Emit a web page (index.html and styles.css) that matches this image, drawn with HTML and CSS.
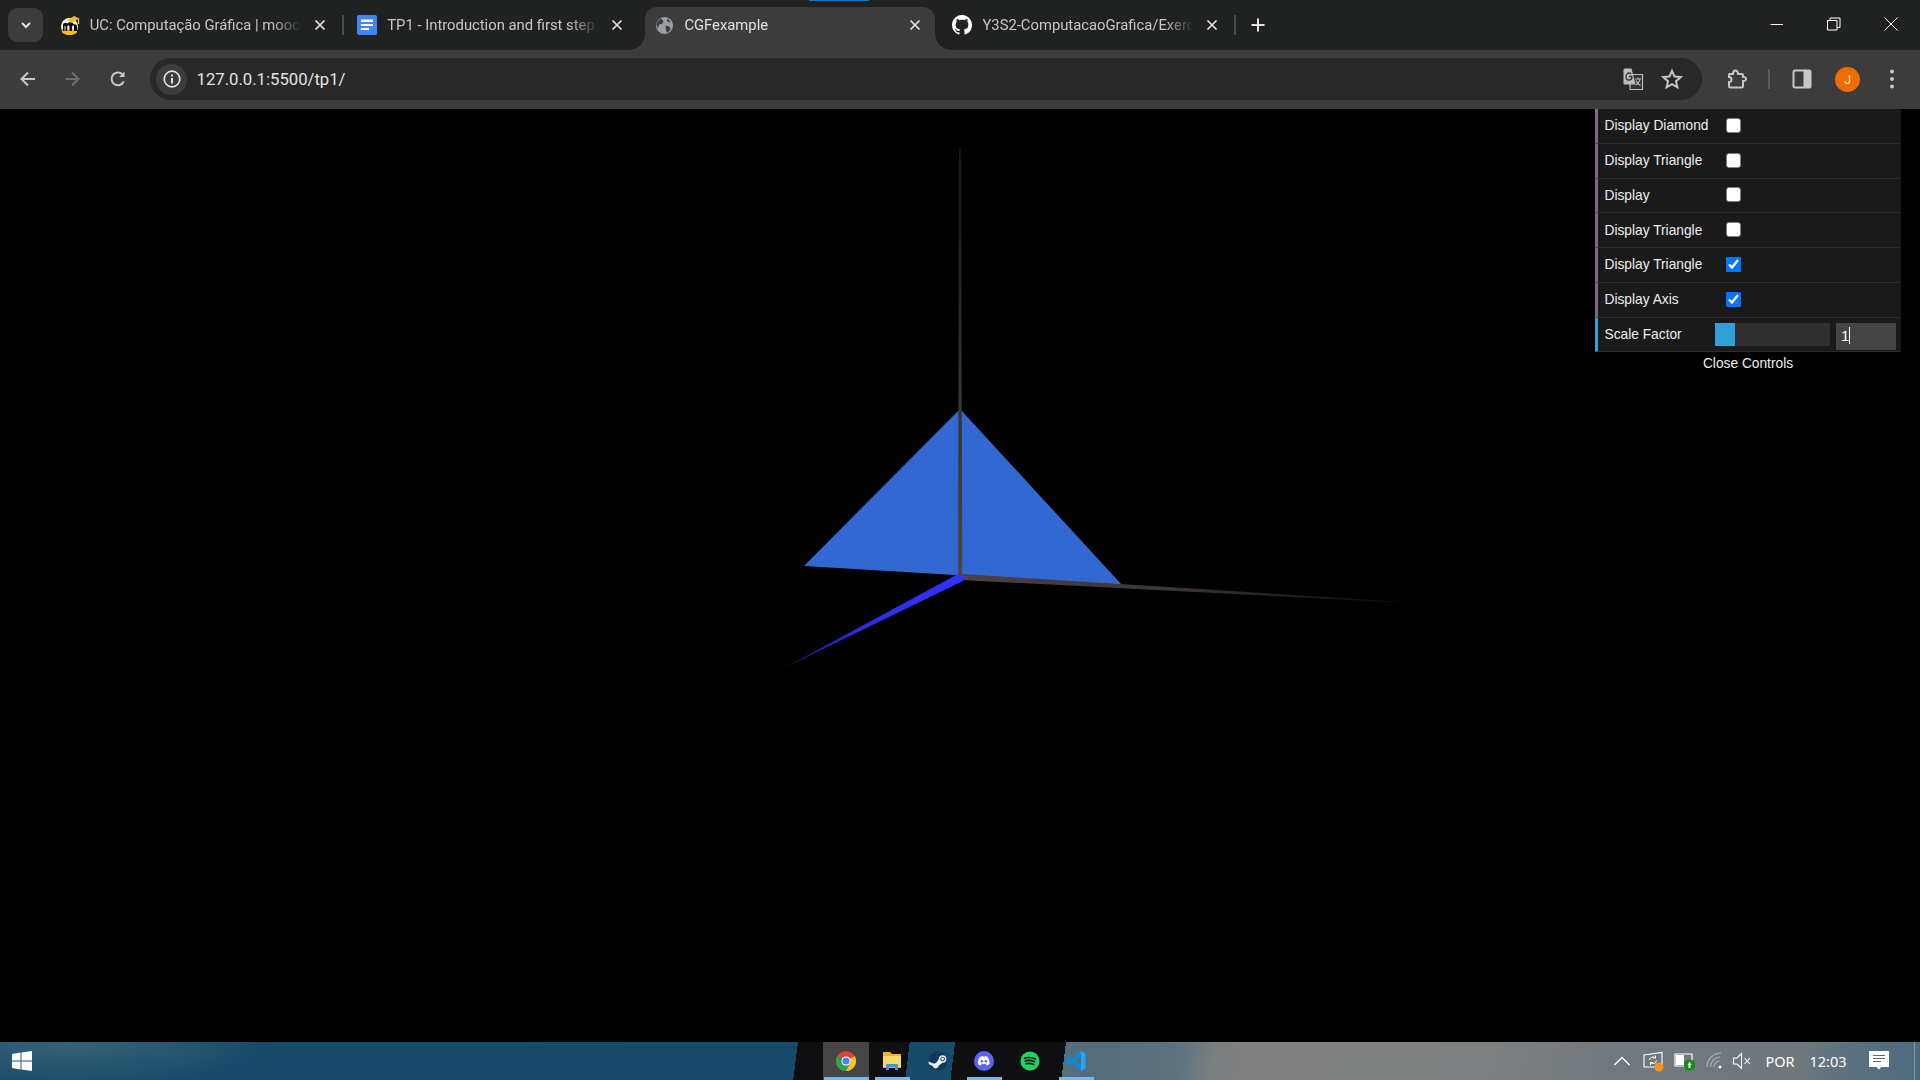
FILE: index.html
```html
<!DOCTYPE html>
<html lang="pt">
<head>
<meta charset="utf-8">
<title>CGFexample</title>
<link rel="stylesheet" href="styles.css">
</head>
<body>
<header class="tabstrip">
  <button class="tabsearch"><svg width="14" height="14" viewBox="0 0 14 14"><path d="M3 5l4 4 4-4" fill="none" stroke="#e3e3e3" stroke-width="2"/></svg></button>
  <div class="tab">
    <svg class="fav" viewBox="0 0 20 20"><circle cx="9.500" cy="11.500" r="8.500" fill="#f7f7f0"/><path d="M2 17.500C4 19.500 7 20 9.500 20S15 19.500 17 17.500V14H2z" fill="#f5b921"/><path d="M3 16V10C3 7.500 6 7 7.500 8.500 9 6.500 13 7 14 9.500 15.500 9 17 10 17 11.500V16H14V11.500C14 10 12.300 10 12 11.500V16H9.500V11.500C9.500 10 7.500 10 7.300 11.500V16H5.500V11H4.500V16Z" fill="#111"/><path d="M7 5.500L14 1 19 3.500 12.500 7.500Z" fill="#f5b921"/><path d="M18.500 3.500V9" stroke="#f5b921" stroke-width="1.400"/></svg>
    <span class="title">UC: Computação Gráfica | mooc</span>
    <svg class="close" viewBox="0 0 16 16"><path d="M3.500 3.500l9 9m0-9l-9 9"/></svg>
    <i class="sep"></i>
  </div>
  <div class="tab">
    <svg class="fav" viewBox="0 0 20 20"><rect width="20" height="20" rx="2" fill="#4285f4"/><path d="M4 4.500h12v2.500H4zM4 9h12v2H4zM4 13h8v2H4z" fill="#fff"/></svg>
    <span class="title">TP1 - Introduction and first step</span>
    <svg class="close" viewBox="0 0 16 16"><path d="M3.500 3.500l9 9m0-9l-9 9"/></svg>
  </div>
  <div class="tab active">
    <svg class="fav" viewBox="0 0 20 20"><circle cx="10" cy="10" r="9" fill="#9aa0a6"/><path d="M6 2.500L9 5 8 8 4.500 9 3 13 1.500 9C2 6 3.500 4 6 2.500ZM11 10l4 1 1.500 3-3 3.500-2-2ZM13 2.800l3.500 3-2 1-2-2Z" fill="#3c3c3c"/></svg>
    <span class="title">CGFexample</span>
    <svg class="close" viewBox="0 0 16 16"><path d="M3.500 3.500l9 9m0-9l-9 9"/></svg>
  </div>
  <div class="tab">
    <svg class="fav" viewBox="0 0 16 16"><path fill="#fff" d="M8 0C3.580 0 0 3.580 0 8c0 3.540 2.290 6.530 5.470 7.590.4.070.55-.17.55-.38 0-.19-.01-.82-.01-1.490-2.010.37-2.530-.49-2.690-.94-.09-.23-.48-.94-.82-1.130-.28-.15-.68-.52-.01-.53.63-.01 1.080.58 1.230.82.72 1.210 1.870.87 2.330.66.07-.52.28-.87.51-1.070-1.780-.2-3.640-.89-3.640-3.950 0-.87.31-1.590.82-2.150-.08-.2-.36-1.020.08-2.120 0 0 .67-.21 2.200.82.64-.18 1.320-.27 2-.27.68 0 1.360.09 2 .27 1.530-1.040 2.200-.82 2.200-.82.44 1.100.16 1.920.08 2.120.51.56.82 1.270.82 2.150 0 3.070-1.870 3.750-3.650 3.950.29.25.54.73.54 1.480 0 1.070-.01 1.930-.01 2.200 0 .21.15.46.55.38A8.013 8.013 0 0016 8c0-4.420-3.580-8-8-8z"/></svg>
    <span class="title">Y3S2-ComputacaoGrafica/Exerc</span>
    <svg class="close" viewBox="0 0 16 16"><path d="M3.500 3.500l9 9m0-9l-9 9"/></svg>
    <i class="sep"></i>
  </div>
  <svg class="newtab" viewBox="0 0 16 16"><path d="M8 1.500v13M1.500 8h13"/></svg>
  <div class="winctl">
    <span class="winbtn"><svg width="14" height="14" viewBox="0 0 14 14"><path d="M1.500 7.500h13" stroke="#fff" fill="none"/></svg></span>
    <span class="winbtn"><svg width="14" height="14" viewBox="0 0 14 14"><path d="M.5 3.500h9.500v9.500H.5zM3 3.500V1h10v9.500h-3" stroke="#fff" fill="none"/></svg></span>
    <span class="winbtn"><svg width="14" height="14" viewBox="0 0 14 14"><path d="M.5.500l13 13m0-13l-13 13" stroke="#fff" fill="none"/></svg></span>
  </div>
</header>

<nav class="toolbar">
  <span class="tbtn"><svg width="20" height="20" viewBox="0 0 20 20"><path d="M17 10H4M10 3.500L3.500 10l6.500 6.500" class="ln"/></svg></span>
  <span class="tbtn"><svg width="20" height="20" viewBox="0 0 20 20"><path d="M2.500 10h13M9 3.500l6.500 6.500-6.500 6.500" class="ln dim"/></svg></span>
  <span class="tbtn"><svg width="20" height="20" viewBox="0 0 20 20"><path d="M15.800 12.500A6.400 6.400 0 1 1 15 5.800" class="ln"/><path d="M16.500 2.500v5.500h-5.500z" fill="#c7c7c7"/></svg></span>
  <div class="omnibox">
    <span class="chip"><svg width="20" height="20" viewBox="0 0 20 20"><circle cx="10" cy="10" r="7.800" fill="none" stroke="#e3e3e3" stroke-width="1.700"/><path d="M9 9h2v5.500H9zM9 5.500h2v2H9z" fill="#e3e3e3"/></svg></span>
    <span class="url">127.0.0.1:5500/tp1/</span>
    <span class="obtn trans"><svg width="22" height="22" viewBox="0 0 22 22"><path d="M8 6.500h12.500v15H8z" fill="#333" stroke="#bdbdbd" stroke-width="1.200"/><path d="M1.500 2A1.500 1.500 0 0 1 3 .5h6.500l4 16H3A1.500 1.500 0 0 1 1.500 15z" fill="#bdbdbd"/><path d="M10 8.500H7M10 8.500c0 2.500-1.500 3.500-3 3.500s-3-1.300-3-3.300S5.500 5 7 5c1 0 1.700.4 2.200 1" fill="none" stroke="#333" stroke-width="1.400"/><path d="M13 11h6M16 9.500V11M18 11c-.5 3-2.500 5-4.500 6M14 12.500c.8 2 2.500 4 4.500 5" fill="none" stroke="#bdbdbd" stroke-width="1.100"/></svg></span>
    <span class="obtn"><svg width="22" height="22" viewBox="0 0 22 22"><path d="M11 2.800l2.500 5.700 6.200.6-4.700 4.100 1.400 6.100L11 16.200l-5.400 3.100L7 13.200 2.300 9.100l6.200-.6z" class="ln"/></svg></span>
  </div>
  <span class="tbtn ext"><svg width="22" height="22" viewBox="0 0 22 22"><path d="M4.500 6H8C8 3.800 9 2.500 10.500 2.500S13 3.800 13 6h3.500A1.500 1.500 0 0 1 18 7.500V9c2-.2 3 .8 3 2s-1 2.200-3 2v5a1.500 1.500 0 0 1-1.500 1.500h-11A1.500 1.500 0 0 1 4 18v-4c1.500 0 2.500-1 2.500-2.500S5.500 9 4 9V7.500A1.500 1.500 0 0 1 4.500 6z" class="ln"/></svg></span>
  <i class="tsep"></i>
  <span class="tbtn side"><svg width="20" height="20" viewBox="0 0 20 20"><rect x="1.500" y="1.500" width="17" height="17" rx="1.500" class="ln"/><path d="M11.500 1.500h7v17h-7z" fill="#c7c7c7"/></svg></span>
  <span class="tbtn profile"><span class="avatar">J</span></span>
  <span class="tbtn dots"><svg width="20" height="24" viewBox="0 0 20 24"><circle cx="10" cy="4.500" r="2" fill="#c7c7c7"/><circle cx="10" cy="12" r="2" fill="#c7c7c7"/><circle cx="10" cy="19.500" r="2" fill="#c7c7c7"/></svg></span>
</nav>

<main class="stage">
  <svg class="scene" viewBox="0 109 1920 933" preserveAspectRatio="none">
    <defs>
      <linearGradient id="gy" gradientUnits="userSpaceOnUse" x1="0" y1="149" x2="0" y2="577"><stop offset="0" stop-color="#161716"/><stop offset=".5" stop-color="#2e312e"/><stop offset="1" stop-color="#454845"/></linearGradient>
      <linearGradient id="gx" gradientUnits="userSpaceOnUse" x1="960" y1="577" x2="1397" y2="602"><stop offset="0" stop-color="#4a4244"/><stop offset=".5" stop-color="#3a3436"/><stop offset="1" stop-color="#0a0909"/></linearGradient>
      <linearGradient id="gz" gradientUnits="userSpaceOnUse" x1="962" y1="577" x2="786" y2="667"><stop offset="0" stop-color="#3232ff"/><stop offset=".6" stop-color="#2c2ce0"/><stop offset="1" stop-color="#16167e"/></linearGradient>
    </defs>
    <polygon points="960,409 804,566 1122,585" fill="#3367d1"/>
    <polygon points="961,574 1397,601.500 1397,602.500 961,580" fill="url(#gx)"/>
    <polygon points="958,574 965,576 963,581 785,667.500" fill="url(#gz)"/>
    <polygon points="959,149 961,149 962.300,576 958,576" fill="url(#gy)"/>
  </svg>
  <aside class="gui">
    <div class="row"><span class="lbl">Display Diamond</span><input class="chk" type="checkbox"></div>
    <div class="row"><span class="lbl">Display Triangle</span><input class="chk" type="checkbox"></div>
    <div class="row"><span class="lbl">Display</span><input class="chk" type="checkbox"></div>
    <div class="row"><span class="lbl">Display Triangle</span><input class="chk" type="checkbox"></div>
    <div class="row"><span class="lbl">Display Triangle</span><input class="chk" type="checkbox" checked></div>
    <div class="row"><span class="lbl">Display Axis</span><input class="chk" type="checkbox" checked></div>
    <div class="row num"><span class="lbl">Scale Factor</span><div class="slider"><div class="fill"></div></div><div class="numbox">1<i class="caret"></i></div></div>
    <div class="closebar">Close Controls</div>
  </aside>
</main>

<footer class="taskbar">
  <svg class="start" viewBox="0 0 20 20"><path d="M0 3L8.500 1.600V9.500H0zM9.500 1.400L20 0V9.500H9.500zM0 10.500H8.500V18.400L0 17zM9.500 10.500H20V20L9.500 18.600z" fill="#fff"/></svg>
  <div class="apps">
    <span class="app hot on"><svg width="20" height="20" viewBox="0 0 20 20"><circle cx="10" cy="10" r="10" fill="#db4437"/><path d="M10 10L1.300 5A10 10 0 0 0 10 20z" fill="#0f9d58"/><path d="M10 10L18.700 5A10 10 0 0 1 10 20z" fill="#fbc02d"/><path d="M10 20l4.300-7.500L10 10 5.700 12.500 1.300 5A10 10 0 0 0 10 20z" fill="#3ca04f"/><circle cx="10" cy="10" r="4.600" fill="#fff"/><circle cx="10" cy="10" r="3.600" fill="#4285f4"/></svg></span>
    <span class="app on part"><svg width="20" height="20" viewBox="0 0 20 20"><path d="M1 1h7l2 2h9v14H1z" fill="#f0b429"/><path d="M1 5h18v11H1z" fill="#fbd96b"/><path d="M4 13h12v6h-3v-3H7v3H4z" fill="#3a9ad9"/></svg></span>
    <span class="app"><svg width="20" height="20" viewBox="0 0 20 20"><circle cx="10" cy="10" r="9.500" fill="#12395a"/><path d="M.5 10.500l5.500 2.300a2.800 2.800 0 0 1 2-.8l2.800-4a3.800 3.800 0 1 1 3.800 3.800l-4 2.900a2.900 2.900 0 0 1-5.700.5L.8 13z" fill="#e8eef2"/><circle cx="14.600" cy="8" r="2.300" fill="#12395a"/><circle cx="14.600" cy="8" r="1.400" fill="#e8eef2"/></svg></span>
    <span class="app on part"><svg width="20" height="20" viewBox="0 0 20 20"><circle cx="10" cy="10" r="10" fill="#5865f2"/><path d="M6.500 5.800c1-.5 2-.7 2.500-.7l.3.600h1.400l.3-.6c.5 0 1.500.2 2.500.7 1.500 2.300 2.200 4.800 2 7.200-1 .8-2 1.200-3 1.400l-.7-1.100.9-.5-.3-.2c-1.700.8-3.700.8-5.400 0l-.3.200.9.500-.7 1.100c-1-.2-2-.6-3-1.400-.2-2.400.5-4.900 2-7.200z" fill="#fff"/><circle cx="8" cy="10.200" r="1.300" fill="#5865f2"/><circle cx="12" cy="10.200" r="1.300" fill="#5865f2"/></svg></span>
    <span class="app"><svg width="20" height="20" viewBox="0 0 20 20"><circle cx="10" cy="10" r="9.500" fill="#1ed760"/><path d="M4.500 7.200c3.700-1.100 7.500-.9 11 .9M5.200 10c3.200-.9 6.300-.7 9.400.8M5.800 12.700c2.700-.7 5.300-.5 7.800.7" fill="none" stroke="#111" stroke-width="1.700" stroke-linecap="round"/></svg></span>
    <span class="app on part"><svg width="20" height="20" viewBox="0 0 20 20"><path fill-rule="evenodd" d="M15 0L19.500 2.400V17.600L15 20 6 11.700 2.200 14.600 0 13.500V6.500L2.200 5.400 6 8.300ZM15 6L9.500 10l5.500 4ZM2.200 8V12L4 10Z" fill="#0e8ad8"/><path d="M15 0L19.500 2.400V17.600L15 20z" fill="#27a4ea"/></svg></span>
  </div>
  <div class="tray">
    <span class="ti"><svg width="18" height="18" viewBox="0 0 18 18"><path d="M1.500 13L9 5.500 16.500 13" fill="none" stroke="#fff" stroke-width="1.300"/></svg></span>
    <span class="ti mon"><svg width="22" height="22" viewBox="0 0 22 22"><path d="M2 5L20 2.500V17H2z" fill="none" stroke="#fff" stroke-width="1.100"/><path d="M7.500 10a3.500 3.500 0 0 1 6-2M14.500 10.500a3.500 3.500 0 0 1-6 2M13.500 5.500V8H11M8.500 15v-2.500H11" fill="none" stroke="#fff"/><circle cx="17" cy="17" r="4.500" fill="#f7941d"/></svg></span>
    <span class="ti bat"><svg width="22" height="20" viewBox="0 0 22 20"><path d="M1 3h17v12H1z" fill="none" stroke="#fff" stroke-width="1.200"/><path d="M2 4h8v10H2z" fill="#fff"/><circle cx="15.500" cy="14" r="5.500" fill="#108a10"/><path d="M15.500 10.500l2 3.500h-1v3h-2v-3h-1z" fill="#fff"/></svg></span>
    <span class="ti wifi"><svg width="20" height="20" viewBox="0 0 20 20"><path d="M1 16A14 14 0 0 1 15 2M4.500 16A10 10 0 0 1 14 6M8 16a6.500 6.500 0 0 1 5.500-6" fill="none" stroke="#b3b6b8" stroke-width="1.100"/><circle cx="14" cy="16" r="1.500" fill="#fff"/></svg></span>
    <span class="ti"><svg width="20" height="18" viewBox="0 0 20 18"><path d="M1.500 6H5L9.500 1.500v15L5 12H1.500z" fill="none" stroke="#fff" stroke-width="1.100"/><path d="M12.500 6l5.500 6m0-6l-5.500 6" fill="none" stroke="#fff" stroke-width="1.100"/></svg></span>
    <span class="tt lang">POR</span>
    <span class="tt clock">12:03</span>
    <span class="notif"><svg width="20" height="20" viewBox="0 0 20 20"><path d="M0 0h20v16H12.500L10 18.500 7.500 16H0z" fill="#fff"/><path d="M4 4.500h12M4 7.500h12M4 10.500h8" stroke="#666" fill="none"/></svg></span>
    <i class="peek"></i>
  </div>
</footer>
</body>
</html>
```
FILE: styles.css
```css
* { box-sizing: border-box; }
html, body { margin: 0; height: 100%; }
body {
  width: 1920px; height: 1080px; overflow: hidden;
  display: flex; flex-direction: column;
  background: #000; color: #fff;
  font-family: Roboto, "Noto Sans", sans-serif;
}
i { display: block; font-style: normal; }

/* tab strip */
.tabstrip {
  height: 50px; flex: none; display: flex; align-items: flex-start;
  padding-left: 8px; background: #202222; position: relative;
}
.tabstrip::before {
  content: ""; position: absolute; left: 809px; top: 0; width: 60px; height: 1px; background: #0a78d7;
}
.tabsearch {
  width: 35px; height: 34px; margin: 8px 4.700px 0 0; padding: 0; border: 0; border-radius: 9px;
  background: #3c3c3c; display: flex; align-items: center; justify-content: center;
}
.tab {
  width: 297.600px; height: 43px; margin-top: 7px; padding: 0 0 7px 12px; flex: none;
  display: flex; align-items: center; color: #c7c7c7; font-size: 14.800px; position: relative;
}
.tab.active {
  width: 290px; margin: 7px 5.600px 0 2px; padding-left: 10.500px; padding-right: 0;
  background: #3c3c3c; color: #e3e3e3; border-radius: 12px 12px 0 0;
}
.tab.active::before, .tab.active::after {
  content: ""; position: absolute; bottom: 0; width: 16px; height: 16px;
}
.tab.active::before { left: -16px; background: radial-gradient(circle at 0 0, transparent 15.500px, #3c3c3c 16px); }
.tab.active::after { right: -16px; background: radial-gradient(circle at 100% 0, transparent 15.500px, #3c3c3c 16px); }
.fav { width: 20px; height: 20px; flex: none; margin-right: 10px; }
.tab.active .fav { width: 19px; height: 19px; margin-right: 10px; }
.title {
  width: 214px; flex: none; margin-right: 8px; overflow: hidden; white-space: nowrap;
  -webkit-mask-image: linear-gradient(90deg, #000 182px, transparent 212px);
  mask-image: linear-gradient(90deg, #000 182px, transparent 212px);
}
.tab.active .title { margin-right: 9px; }
.close { width: 16px; height: 16px; flex: none; }
.close path { stroke: #e3e3e3; stroke-width: 1.700; fill: none; }
.sep { width: 2px; height: 20px; margin-left: 14px; background: #4a4b4b; }
.newtab { width: 16px; height: 16px; flex: none; margin: 17px 0 0 12px; }
.newtab path { stroke: #e3e3e3; stroke-width: 2; fill: none; }
.winctl { margin-left: auto; display: flex; }
.winbtn { width: 57.500px; height: 48px; display: flex; align-items: center; justify-content: center; }

/* toolbar */
.toolbar {
  height: 59px; flex: none; display: flex; align-items: flex-start;
  padding: 8px 0 0 5px; background: #3c3c3c; position: relative;
}
.ln { fill: none; stroke: #c7c7c7; stroke-width: 2; }
.ln.dim { stroke: #6f6f6f; }
.tbtn { width: 45px; height: 42px; flex: none; display: flex; align-items: center; justify-content: center; }
.omnibox {
  width: 1552px; height: 42px; margin-left: 10px; padding: 0 15px 0 6px; flex: none;
  display: flex; align-items: center; background: #282828; border-radius: 21px;
}
.chip {
  width: 31px; height: 31px; flex: none; border-radius: 50%; background: #3c3c3c;
  display: flex; align-items: center; justify-content: center;
}
.url { margin-left: 9.500px; font-size: 16.700px; color: #e3e3e3; }
.obtn { width: 30px; height: 30px; flex: none; display: flex; align-items: center; justify-content: center; }
.trans { margin-left: auto; margin-right: 9.500px; }
.ext { margin-left: 11.500px; }
.tsep { width: 2px; height: 20px; margin: 11px 9px 0 9.500px; background: #5c5c5c; flex: none; }
.side { margin-left: 0; }
.profile { padding-left: 2px; }
.dots { padding-left: 1px; }
.avatar {
  width: 25px; height: 25px; border-radius: 50%; background: #ef6c00; color: #f5e0d0;
  font-size: 13px; display: flex; align-items: center; justify-content: center;
}

/* page */
.stage { flex: 1; min-height: 0; position: relative; background: #000; }
.scene { display: block; width: 100%; height: 100%; }
.gui {
  position: absolute; top: 0; right: 19px; width: 306px;
  font-family: "Liberation Sans", Arial, sans-serif; font-size: 13.750px; color: #eee;
}
.row {
  height: 34.750px; display: flex; align-items: center; padding-left: 6.500px;
  background: #1a1a1a; border-left: 3px solid #806787; border-bottom: 1px solid #2c2c2c;
}
.lbl { width: 110.500px; flex: none; white-space: nowrap; }
.chk { width: 15px; height: 15px; margin: 0 0 1px 11px; flex: none; }
.chk:not(:checked) {
  appearance: none; -webkit-appearance: none;
  background: #fff; border: 1.500px solid #808080; border-radius: 3px;
}
.row.num { border-left-color: #2fa1d6; align-items: flex-start; }
.row.num .lbl { line-height: 33px; }
.slider { width: 115px; height: 23px; margin-top: 5.500px; background: #303030; flex: none; }
.fill { width: 20px; height: 100%; background: #2fa1d6; }
.numbox {
  width: 60px; height: 27px; margin: 5.500px 0 0 6px; padding: 0 0 3px 5px; flex: none;
  display: flex; align-items: center; background: #444; color: #fff; font-size: 15px;
}
.caret { width: 1px; height: 17px; background: #fff; margin-left: 0; }
.closebar { height: 24px; line-height: 24px; text-align: center; background: #000; color: #eee; }

/* taskbar */
.taskbar {
  height: 38px; flex: none; display: flex; align-items: center; padding-left: 12px;
  background:
    radial-gradient(ellipse 200px 45px at 70px 0, rgba(120,140,150,.35), transparent),
    linear-gradient(97deg,
      #174b69 0, #174a68 792px,
      #0f0f12 792px, #0f0f12 903px,
      #174c68 903px, #174c68 948px,
      #0f0f12 948px, #0f0f12 1058px,
      #566e7c 1058px, #536d7c 1095px, #5f7380 1175px, #7a7f80 1205px, #808080 1245px,
      #7d8081 1490px, #72797e 1590px, #6f777c 1790px, #5d7280 1830px, #4d6a7e 1910px);
}
.start { width: 20px; height: 20px; flex: none; }
.apps { margin-left: 791px; display: flex; height: 38px; flex: none; }
.app { width: 46px; height: 38px; display: flex; align-items: center; justify-content: center; position: relative; flex: none; }
.app.hot { background: #454545; }
.app.on::after { content: ""; position: absolute; left: 1px; right: 0; bottom: 0; height: 3px; background: #76b9ed; }
.app.part::after { left: 6px; right: 5px; }
.tray { margin-left: auto; display: flex; align-items: center; height: 38px; flex: none; }
.ti { width: 30px; display: flex; justify-content: center; align-items: center; flex: none; }
.mon { padding-left: 2px; }
.bat { padding-left: 6px; }
.wifi { padding-left: 8px; }
.tt { text-align: center; font-size: 14.500px; color: #fff; font-family: "Noto Sans", sans-serif; flex: none; }
.lang { width: 46px; }
.clock { width: 50px; }
.notif { width: 52px; display: flex; justify-content: center; flex: none; }
.peek { width: 15px; height: 38px; flex: none; position: relative; }
.peek::before { content: ""; display: block; width: 1px; height: 38px; margin-left: 9px; background: #8a969e; }
```
